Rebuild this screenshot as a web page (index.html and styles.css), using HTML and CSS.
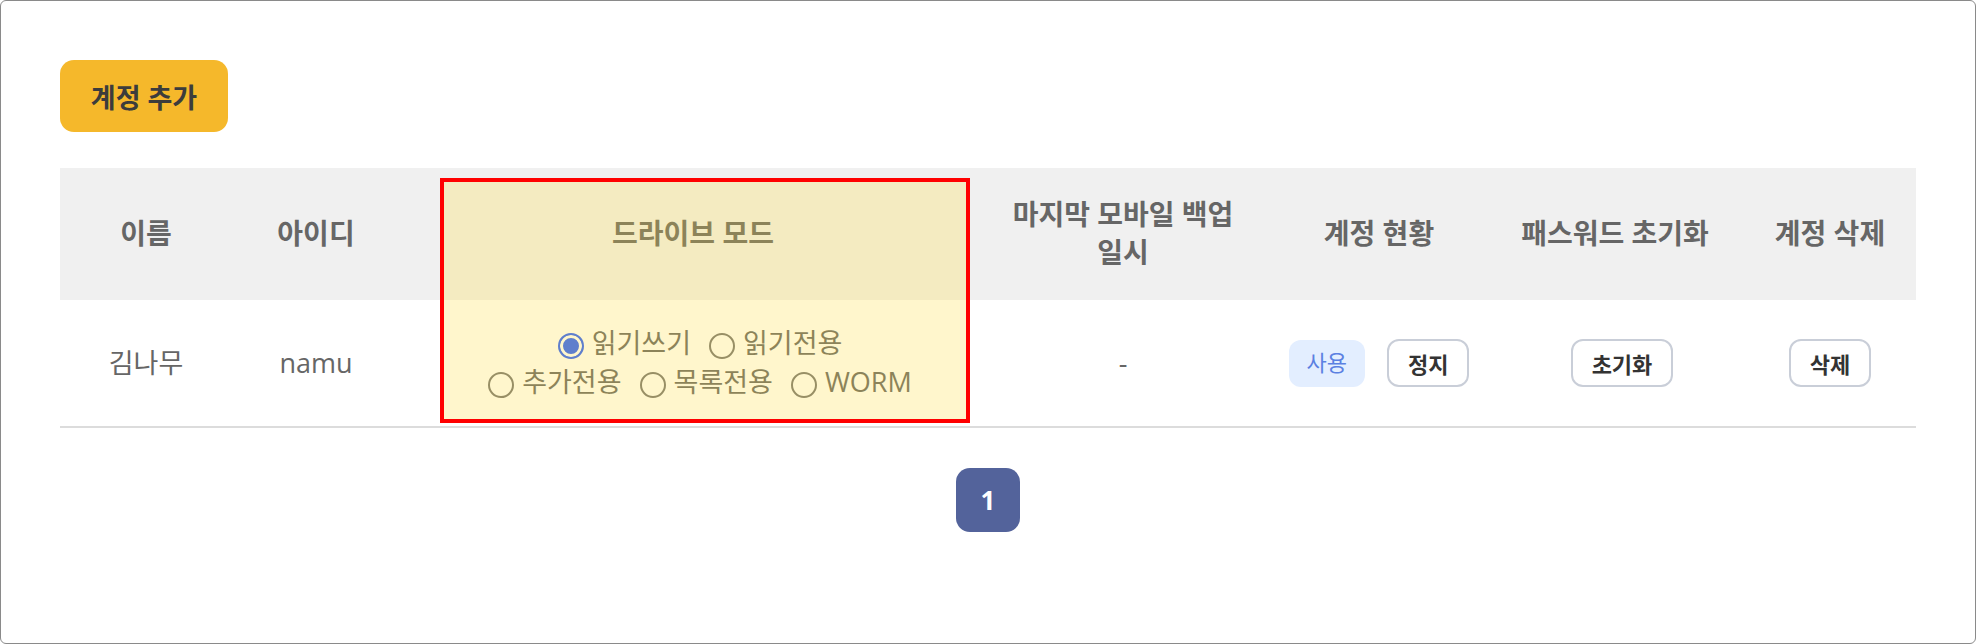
FILE: index.html
```html
<!DOCTYPE html>
<html lang="ko">
<head>
    <meta charset="UTF-8">
    <meta name="viewport" content="width=device-width, initial-scale=1.0">
    <title>계정 관리</title>
    <link rel="stylesheet" href="styles.css">
</head>
<body>
    <div class="frame">
        <div class="page">
            <button class="btn-add">계정 추가</button>

            <div class="table-wrap">
                <table class="account-table">
                    <colgroup>
                        <col class="col-name">
                        <col class="col-id">
                        <col class="col-mode">
                        <col class="col-backup">
                        <col class="col-status">
                        <col class="col-reset">
                        <col class="col-delete">
                    </colgroup>
                    <thead>
                        <tr>
                            <th>이름</th>
                            <th>아이디</th>
                            <th class="head-shift">드라이브 모드</th>
                            <th>마지막 모바일 백업 일시</th>
                            <th>계정 현황</th>
                            <th class="head-shift">패스워드 초기화</th>
                            <th class="cell-delete">계정 삭제</th>
                        </tr>
                    </thead>
                    <tbody>
                        <tr>
                            <td>김나무</td>
                            <td>namu</td>
                            <td>
                                <div class="mode-options">
                                    <div class="mode-row">
                                        <label class="mode-option"><input type="radio" name="mode-namu" checked>읽기쓰기</label>
                                        <label class="mode-option"><input type="radio" name="mode-namu">읽기전용</label>
                                    </div>
                                    <div class="mode-row">
                                        <label class="mode-option"><input type="radio" name="mode-namu">추가전용</label>
                                        <label class="mode-option"><input type="radio" name="mode-namu">목록전용</label>
                                        <label class="mode-option"><input type="radio" name="mode-namu">WORM</label>
                                    </div>
                                </div>
                            </td>
                            <td>-</td>
                            <td>
                                <div class="status">
                                    <span class="chip">사용</span>
                                    <button class="btn-line">정지</button>
                                </div>
                            </td>
                            <td><button class="btn-line">초기화</button></td>
                            <td class="cell-delete"><button class="btn-line">삭제</button></td>
                        </tr>
                    </tbody>
                </table>
                <!-- 드라이브 모드 컬럼 강조 표시 -->
                <div class="highlight"></div>
            </div>

            <nav class="pager" aria-label="페이지">
                <button class="page-num active">1</button>
            </nav>
        </div>
    </div>
</body>
</html>
```

FILE: styles.css
```css
:root {
    --accent-color: #f5b82b;
    --pager-color: #53639b;
    --text-color: #666;
    --head-bg: #f0f0f0;
    --line-color: #dcdcdc;
}
* {
    box-sizing: border-box;
}
body {
    margin: 0;
    font-family: 'Open Sans', 'Noto Sans CJK KR', sans-serif;
    color: var(--text-color);
    background-color: #fff;
}
button {
    font-family: inherit;
    cursor: pointer;
}
.frame {
    height: 644px;
    border: 1px solid #8a8a8a;
    border-radius: 6px;
    overflow: hidden;
}
.page {
    padding: 59px;
}
.btn-add {
    display: block;
    width: 168px;
    height: 72px;
    border: none;
    border-radius: 14px;
    background-color: var(--accent-color);
    color: #3c3c3c;
    font-size: 27px;
    font-weight: 700;
}
.table-wrap {
    position: relative;
    margin-top: 36px;
}
.account-table {
    width: 100%;
    table-layout: fixed;
    border-collapse: separate;
    border-spacing: 0;
    font-size: 27px;
    line-height: 1.35;
    text-align: center;
    word-break: keep-all;
}
.col-name { width: 172px; }
.col-id { width: 168px; }
.col-mode { width: 600px; }
.col-backup { width: 246px; }
.col-status { width: 266px; }
.col-reset { width: 220px; }
.col-delete { width: 184px; }
.account-table th {
    height: 132px;
    padding: 0;
    background-color: var(--head-bg);
    font-size: 28px;
    font-weight: 700;
    vertical-align: middle;
}
.account-table td {
    height: 128px;
    padding: 0;
    border-bottom: 2px solid var(--line-color);
    vertical-align: middle;
}
.account-table .head-shift {
    padding-right: 14px;
}
.account-table .cell-delete {
    padding-left: 12px;
}
.mode-options {
    display: flex;
    flex-direction: column;
}
.mode-row {
    display: flex;
    justify-content: center;
    align-items: center;
    gap: 18px;
    height: 39px;
}
.mode-option {
    display: inline-flex;
    align-items: center;
    gap: 8px;
    white-space: nowrap;
}
.mode-option input {
    appearance: none;
    width: 26px;
    height: 26px;
    margin: 4px 0 0;
    border: 2px solid #767676;
    border-radius: 50%;
    background-color: #fff;
}
.mode-option input:checked {
    border-color: #2a60ff;
    background-color: #2a60ff;
    box-shadow: inset 0 0 0 3px #fff;
}
.status {
    display: inline-flex;
    align-items: center;
    gap: 22px;
}
.chip {
    display: inline-flex;
    align-items: center;
    height: 47px;
    padding: 0 18px;
    border-radius: 12px;
    background-color: #e3eeff;
    color: #5b80e2;
    font-size: 22px;
}
.btn-line {
    height: 48px;
    padding: 0 19px;
    border: 2px solid #c9ced8;
    border-radius: 12px;
    background-color: #fff;
    color: #333;
    font-size: 22px;
    font-weight: 700;
}
.highlight {
    position: absolute;
    left: 380px;
    top: 10px;
    width: 530px;
    height: 245px;
    border: 4px solid #ff0000;
    background-color: rgba(255, 219, 51, 0.25);
    pointer-events: none;
}
.pager {
    display: flex;
    justify-content: center;
    margin-top: 40px;
}
.page-num {
    width: 64px;
    height: 64px;
    border: none;
    border-radius: 14px;
    background-color: var(--pager-color);
    color: #fff;
    font-size: 26px;
    font-weight: 700;
}
```
